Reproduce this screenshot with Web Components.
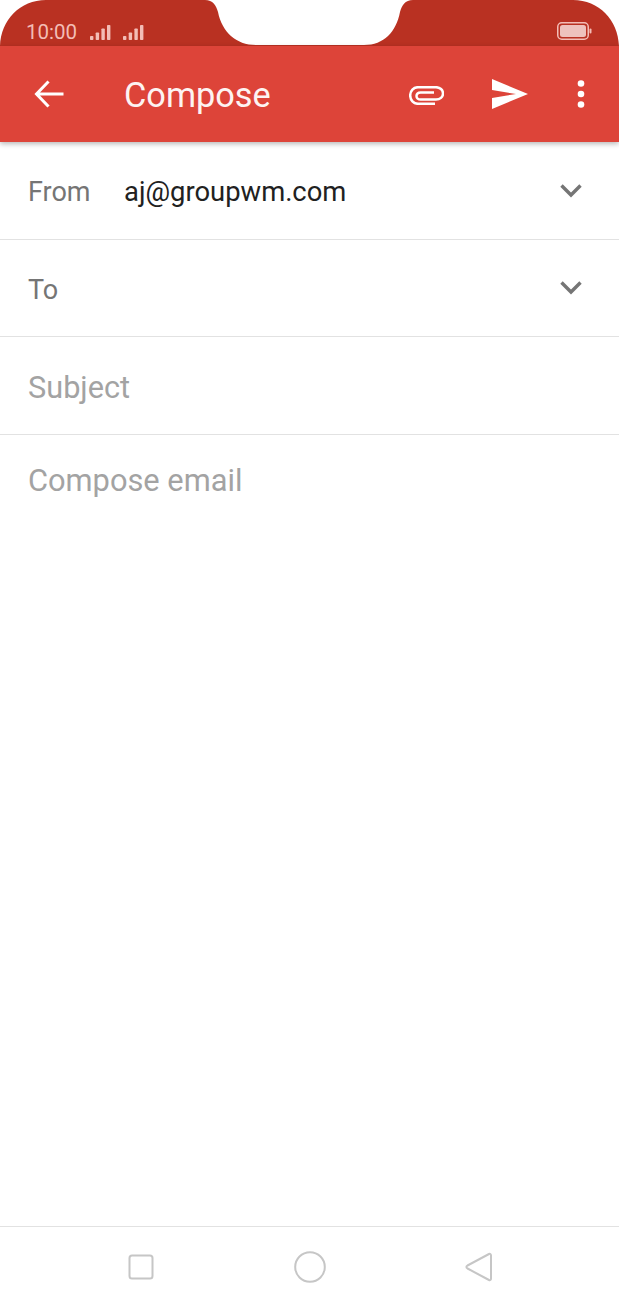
<!DOCTYPE html>
<html>
<head>
<meta charset="utf-8">
<title>Compose</title>
<style>
  html, body { margin: 0; padding: 0; height: 100%; background: #fff; }
  body { font-family: Roboto, "Liberation Sans", sans-serif; }
  #app { display: flex; flex-direction: column; height: 1308px; overflow: hidden; }
</style>
</head>
<body>
<div id="app">
  <status-bar time="10:00"></status-bar>
  <compose-toolbar title="Compose"></compose-toolbar>
  <compose-field label="From" value="aj@groupwm.com" chevron h="98"></compose-field>
  <compose-field label="To" chevron h="97"></compose-field>
  <compose-field label="Subject" hint h="98" size="30.700"></compose-field>
  <compose-body hint="Compose email"></compose-body>
  <nav-bar></nav-bar>
</div>
<script>
// Status bar, the red shape has the notch cut out of it
class StatusBar extends HTMLElement {
    constructor() {
        super();
        this.attachShadow({ mode: 'open' });
    }

    connectedCallback() {
        const bars = `
          <svg width="21" height="15" viewBox="0 0 21 15" fill="#f3bdb6">
            <rect x="0" y="11" width="3.400" height="4" rx=".8"/>
            <rect x="5.700" y="7.500" width="3.400" height="7.500" rx=".8"/>
            <rect x="11.400" y="3.500" width="3.400" height="11.500" rx=".8"/>
            <rect x="17" y="0" width="3.400" height="15" rx=".8"/>
          </svg>`;
        this.shadowRoot.innerHTML = `
      <style>
        :host {
          display: block;
          position: relative;
          height: 46px;
          flex: none;
          background: #fff;
        }
        .shape { position: absolute; left: 0; top: 0; }
        .row {
          position: relative;
          height: 100%;
          display: flex;
          align-items: center;
          padding: 17px 27px 0 26px;
          box-sizing: border-box;
          color: #f3bdb6;
          font-size: 20.500px;
        }
        .time { margin-right: 13px; }
        .bars { display: flex; gap: 12px; margin-top: 1px; }
        .bars svg { display: block; }
        .battery { margin-left: auto; margin-top: -1px; display: block; }
      </style>
      <svg class="shape" width="619" height="46" viewBox="0 0 619 46">
        <path fill="#b93122" d="M0 46 C1 20 20 0 46 0 L205 0 C213 0 216 5 218 12 C222 32 236 45 256 45 L364 45 C384 45 396 32 400 12 C402 5 405 0 413 0 L573 0 C599 0 618 20 619 46 Z"/>
      </svg>
      <div class="row">
        <span class="time">${this.getAttribute('time')}</span>
        <span class="bars">${bars}${bars}</span>
        <svg class="battery" width="35" height="18" viewBox="0 0 35 18">
          <rect x=".75" y=".75" width="30.500" height="16.500" rx="4" fill="none" stroke="#f3bdb6" stroke-width="1.500"/>
          <rect x="3" y="3" width="26" height="12" rx="2.500" fill="#eec2bd"/>
          <rect x="32.500" y="6.500" width="2" height="5" rx="1" fill="#f3bdb6"/>
        </svg>
      </div>
    `;
    }
}

class ComposeToolbar extends HTMLElement {
    constructor() {
        super();
        this.attachShadow({ mode: 'open' });
    }

    connectedCallback() {
        this.shadowRoot.innerHTML = `
      <style>
        :host {
          display: block;
          position: relative;
          z-index: 1;
          height: 96px;
          flex: none;
          background: #dd4439;
          box-shadow: 0 2px 5px rgba(0, 0, 0, 0.28);
        }
        .bar {
          height: 100%;
          display: flex;
          align-items: center;
          color: #fff;
        }
        .back { margin-left: 34px; display: block; }
        h1 {
          margin: 0 0 0 60px;
          padding-top: 2px;
          font-size: 34.300px;
          font-weight: 400;
          flex: 1;
          color: #fdf3f2;
        }
        svg { display: block; flex: none; }
        .clip { margin: 2px 48px 0 0; }
        .send { margin-right: 49px; }
        .more { margin-right: 34px; }
      </style>
      <div class="bar">
        <svg class="back" width="30" height="28" viewBox="0 0 30 28" fill="none" stroke="#fff" stroke-width="3" stroke-linecap="square">
          <path d="M13.500 2.500 L2.500 14 L13.500 25.500 M3.500 14 H28"/>
        </svg>
        <h1>${this.getAttribute('title')}</h1>
        <svg class="clip" width="35" height="19" viewBox="0 0 35 19" fill="none" stroke="#fff" stroke-width="2.500">
          <path d="M26 17.800 H9 C4.500 17.800 1.200 14 1.200 9.500 C1.200 5 4.500 1.200 9 1.200 H27 C31 1.200 34 4 34 7.500 C34 11 31 13.600 27 13.600 H11.500 C9.200 13.600 7.500 12 7.500 10 C7.500 8 9 6.600 11.500 6.600 H25"/>
        </svg>
        <svg class="send" width="36" height="30" viewBox="0 0 36 30" fill="#fff">
          <path d="M0 0 L36 15 L0 30 L0 19 L24 15 L0 11 Z"/>
        </svg>
        <svg class="more" width="8" height="28" viewBox="0 0 8 28" fill="#fff">
          <circle cx="4" cy="3.500" r="3.300"/>
          <circle cx="4" cy="14" r="3.300"/>
          <circle cx="4" cy="24.500" r="3.300"/>
        </svg>
      </div>
    `;
    }
}

// One row of the form: label, optional value, optional chevron
class ComposeField extends HTMLElement {
    constructor() {
        super();
        this.attachShadow({ mode: 'open' });
    }

    connectedCallback() {
        const value = this.getAttribute('value');
        const height = this.getAttribute('h') || 97;
        const size = this.getAttribute('size') || 27;
        this.shadowRoot.innerHTML = `
      <style>
        :host {
          display: block;
          flex: none;
          height: ${height}px;
          box-sizing: border-box;
          border-bottom: 1px solid #e2e2e2;
          font-size: ${size}px;
        }
        .row {
          height: 100%;
          display: flex;
          align-items: center;
          box-sizing: border-box;
          padding: 3px 36px 0 28px;
        }
        .label { width: 96px; color: #757575; flex: none; white-space: nowrap; }
        .label.hint { color: #a3a3a3; }
        .value { color: #212121; flex: 1; font-size: 27.400px; }
        svg { display: block; margin: -4px 0 0 auto; }
      </style>
      <div class="row">
        <span class="label ${this.hasAttribute('hint') ? 'hint' : ''}">${this.getAttribute('label')}</span>
        ${value ? `<span class="value">${value}</span>` : ''}
        ${this.hasAttribute('chevron') ? `
          <svg width="24" height="15" viewBox="0 0 24 15" fill="none" stroke="#757575" stroke-width="3.400">
            <path d="M2.500 2.500 L12 12 L21.500 2.500"/>
          </svg>` : ''}
      </div>
    `;
    }
}

class ComposeBody extends HTMLElement {
    constructor() {
        super();
        this.attachShadow({ mode: 'open' });
    }

    connectedCallback() {
        this.shadowRoot.innerHTML = `
      <style>
        :host {
          display: block;
          flex: 1;
          padding: 27px 28px 0;
          color: #a3a3a3;
          font-size: 30.800px;
        }
      </style>
      <div>${this.getAttribute('hint')}</div>
    `;
    }
}

class NavBar extends HTMLElement {
    constructor() {
        super();
        this.attachShadow({ mode: 'open' });
    }

    connectedCallback() {
        this.shadowRoot.innerHTML = `
      <style>
        :host {
          display: block;
          flex: none;
          height: 82px;
          box-sizing: border-box;
          border-top: 1px solid #e2e2e2;
        }
        .row {
          height: 100%;
          display: flex;
          align-items: center;
          padding: 0 127px 2px 128px;
          justify-content: space-between;
          box-sizing: border-box;
        }
        svg { display: block; }
      </style>
      <div class="row">
        <svg width="26" height="26" viewBox="0 0 26 26" fill="none" stroke="#c6c6c6" stroke-width="2">
          <rect x="1.500" y="1.500" width="23" height="23" rx="2.500"/>
        </svg>
        <svg width="32" height="32" viewBox="0 0 32 32" fill="none" stroke="#c6c6c6" stroke-width="2">
          <circle cx="16" cy="16" r="14.800"/>
        </svg>
        <svg width="27" height="30" viewBox="0 0 27 30" fill="none" stroke="#c6c6c6" stroke-width="2" stroke-linejoin="round">
          <path d="M24 2 C25 1.500 26 2 26 3.500 V26.500 C26 28 25 28.500 24 28 L2.500 16.500 C1 15.500 1 14.500 2.500 13.500 Z"/>
        </svg>
      </div>
    `;
    }
}

customElements.define('status-bar', StatusBar);
customElements.define('compose-toolbar', ComposeToolbar);
customElements.define('compose-field', ComposeField);
customElements.define('compose-body', ComposeBody);
customElements.define('nav-bar', NavBar);
</script>
</body>
</html>
